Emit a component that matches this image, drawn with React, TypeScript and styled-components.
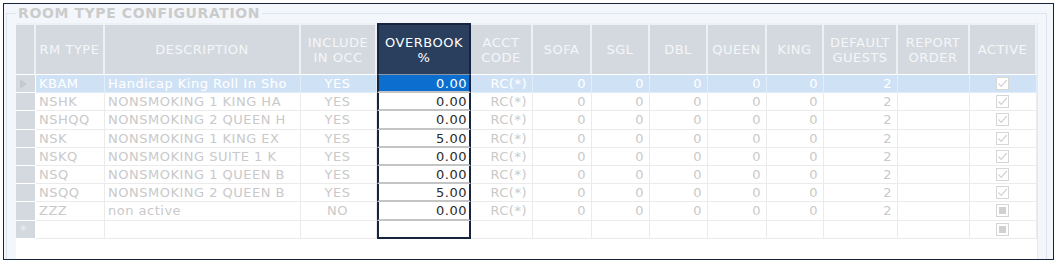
import styled, { createGlobalStyle } from 'styled-components'

const GlobalStyle = createGlobalStyle`
  body {
    margin: 0;
    background: #ffffff;
    font-family: "DejaVu Sans", Verdana, sans-serif;
  }
`

type Align = 'left' | 'center' | 'right'

const cols: { key: string; label: string; w: number; align: Align }[] = [
  { key: 'type', label: 'RM TYPE', w: 69, align: 'left' },
  { key: 'desc', label: 'DESCRIPTION', w: 196, align: 'left' },
  { key: 'occ', label: 'INCLUDE\nIN OCC', w: 76, align: 'center' },
  { key: 'ob', label: 'OVERBOOK\n%', w: 94, align: 'right' },
  { key: 'acct', label: 'ACCT\nCODE', w: 62, align: 'right' },
  { key: 'sofa', label: 'SOFA', w: 59, align: 'right' },
  { key: 'sgl', label: 'SGL', w: 58, align: 'right' },
  { key: 'dbl', label: 'DBL', w: 58, align: 'right' },
  { key: 'queen', label: 'QUEEN', w: 59, align: 'right' },
  { key: 'king', label: 'KING', w: 57, align: 'right' },
  { key: 'guests', label: 'DEFAULT\nGUESTS', w: 74, align: 'right' },
  { key: 'order', label: 'REPORT\nORDER', w: 72, align: 'right' },
  { key: 'active', label: 'ACTIVE', w: 67, align: 'center' },
]

const template = '20px ' + cols.map((c) => c.w + 'px').join(' ')

type Room = { type: string; desc: string; occ: string; ob: string; active: 'on' | 'off' }

const rooms: Room[] = [
  { type: 'KBAM', desc: 'Handicap King Roll In Sho', occ: 'YES', ob: '0.00', active: 'on' },
  { type: 'NSHK', desc: 'NONSMOKING 1 KING HA', occ: 'YES', ob: '0.00', active: 'on' },
  { type: 'NSHQQ', desc: 'NONSMOKING 2 QUEEN H', occ: 'YES', ob: '0.00', active: 'on' },
  { type: 'NSK', desc: 'NONSMOKING 1 KING EX', occ: 'YES', ob: '5.00', active: 'on' },
  { type: 'NSKQ', desc: 'NONSMOKING SUITE 1 K', occ: 'YES', ob: '0.00', active: 'on' },
  { type: 'NSQ', desc: 'NONSMOKING 1 QUEEN B', occ: 'YES', ob: '0.00', active: 'on' },
  { type: 'NSQQ', desc: 'NONSMOKING 2 QUEEN B', occ: 'YES', ob: '5.00', active: 'on' },
  { type: 'ZZZ', desc: 'non active', occ: 'NO', ob: '0.00', active: 'off' },
]

function App() {
  return (
    <Page>
      <GlobalStyle />
      <Frame>
        <Group>
          <Legend>ROOM TYPE CONFIGURATION</Legend>
          <Panel>
            <Row>
              <HeadCell />
              {cols.map((c) => (
                <HeadCell key={c.key} $hot={c.key === 'ob'}>
                  {c.label}
                </HeadCell>
              ))}
            </Row>

            {rooms.map((r, i) => {
              const sel = i === 0
              const values: Record<string, string> = {
                type: r.type,
                desc: r.desc,
                occ: r.occ,
                ob: r.ob,
                acct: 'RC(*)',
                sofa: '0',
                sgl: '0',
                dbl: '0',
                queen: '0',
                king: '0',
                guests: '2',
                order: '',
              }
              return (
                <Row key={r.type}>
                  <RowHead>
                    {sel && (
                      <svg width="7" height="10" viewBox="0 0 7 10">
                        <path d="M0 0 L7 5 L0 10 Z" fill="#c4c9cf" />
                      </svg>
                    )}
                  </RowHead>
                  {cols.map((c) => (
                    <Cell key={c.key} $align={c.align} $sel={sel} $hot={c.key === 'ob'}>
                      {c.key === 'active' ? <Check $on={r.active === 'on'} /> : values[c.key]}
                    </Cell>
                  ))}
                </Row>
              )
            })}

            <Row>
              <RowHead>
                <Star>*</Star>
              </RowHead>
              {cols.map((c) => (
                <Cell key={c.key} $align={c.align} $hot={c.key === 'ob'} $last>
                  {c.key === 'active' ? <Check $on={false} /> : ''}
                </Cell>
              ))}
            </Row>
          </Panel>
        </Group>
      </Frame>
    </Page>
  )
}

function Check({ $on }: { $on: boolean }) {
  return (
    <Box>
      {$on ? (
        <svg width="11" height="11" viewBox="0 0 11 11">
          <path d="M1.5 5.5 L4.2 8.3 L9.8 2" fill="none" stroke="#d2d2d2" strokeWidth="1.2" />
        </svg>
      ) : (
        <Fill />
      )}
    </Box>
  )
}

export default App

const Page = styled.div`
  padding: 3px 0 0 3px;
`

const Frame = styled.div`
  width: 1051px;
  height: 257px;
  box-sizing: border-box;
  border: 1px solid #16243d;
  background: #f3f7fc;
  overflow: hidden;
  padding: 0 6px 0 2px;
`

const Group = styled.fieldset`
  margin: 0;
  padding: 1px 7px 0 9px;
  border: 1px solid #dde4ec;
  min-width: 0;
  height: 300px;
  box-sizing: border-box;
`

const Legend = styled.legend`
  padding: 0 2px;
  font-weight: bold;
  font-size: 14px;
  line-height: 18px;
  letter-spacing: 0.6px;
  color: #cbcbcb;
`

const Panel = styled.div`
  width: 1022px;
  height: 260px;
  box-sizing: border-box;
  background: #ffffff;
  border-right: 1px solid #e5e8ec;
  font-size: 13px;
  letter-spacing: 0.5px;
`

const Row = styled.div`
  display: grid;
  grid-template-columns: ${template};
`

const HeadCell = styled.div<{ $hot?: boolean }>`
  height: 52px;
  box-sizing: border-box;
  display: flex;
  align-items: center;
  justify-content: center;
  text-align: center;
  white-space: pre-line;
  line-height: 15px;
  background: ${(p) => (p.$hot ? '#2a3f5e' : '#d4d9df')};
  color: ${(p) => (p.$hot ? '#ffffff' : '#f4f6f8')};
  border-top: 2px solid ${(p) => (p.$hot ? '#16243d' : '#eef1f4')};
  border-right: 2px solid ${(p) => (p.$hot ? '#16243d' : '#eef1f4')};
  border-left: ${(p) => (p.$hot ? '2px solid #16243d' : 'none')};
  border-bottom: 1px solid ${(p) => (p.$hot ? '#8a96a6' : '#ffffff')};
`

const RowHead = styled.div`
  height: 18.2px;
  box-sizing: border-box;
  background: #d4d9df;
  border-right: 1px solid #ffffff;
  border-bottom: 1px solid #ffffff;
  display: flex;
  align-items: center;
  padding-left: 4px;
`

const Star = styled.span`
  color: #eceef1;
  font-size: 13px;
  line-height: 17px;
`

const Cell = styled.div<{ $align: Align; $sel?: boolean; $hot?: boolean; $last?: boolean }>`
  height: 18.2px;
  box-sizing: border-box;
  padding: 0 ${(p) => (p.$hot ? '2px' : '5px')} 0 3px;
  line-height: 17px;
  overflow: hidden;
  white-space: nowrap;
  text-align: ${(p) => p.$align};
  background: ${(p) => (p.$hot ? (p.$sel ? '#0c6fd0' : '#ffffff') : p.$sel ? '#cfe2f5' : '#ffffff')};
  color: ${(p) => (p.$hot ? (p.$sel ? '#ffffff' : '#2b2b2b') : p.$sel ? '#ffffff' : '#c9c9c9')};
  border-right: ${(p) => (p.$hot ? '2px solid #16243d' : `1px solid ${p.$sel ? '#e2edf9' : '#ebebeb'}`)};
  border-left: ${(p) => (p.$hot ? '2px solid #16243d' : 'none')};
  border-bottom: ${(p) =>
    p.$hot ? (p.$last ? '2px solid #16243d' : '2px solid #c4c4c4') : `1px solid ${p.$sel ? '#e2edf9' : '#ebebeb'}`};
  display: ${(p) => (p.$align === 'center' ? 'flex' : 'block')};
  align-items: center;
  justify-content: center;
`

const Box = styled.span`
  width: 13px;
  height: 13px;
  box-sizing: border-box;
  border: 1px solid #d6d6d6;
  background: #ffffff;
  display: inline-flex;
  align-items: center;
  justify-content: center;
`

const Fill = styled.span`
  width: 7px;
  height: 7px;
  background: #d0d0d0;
`
